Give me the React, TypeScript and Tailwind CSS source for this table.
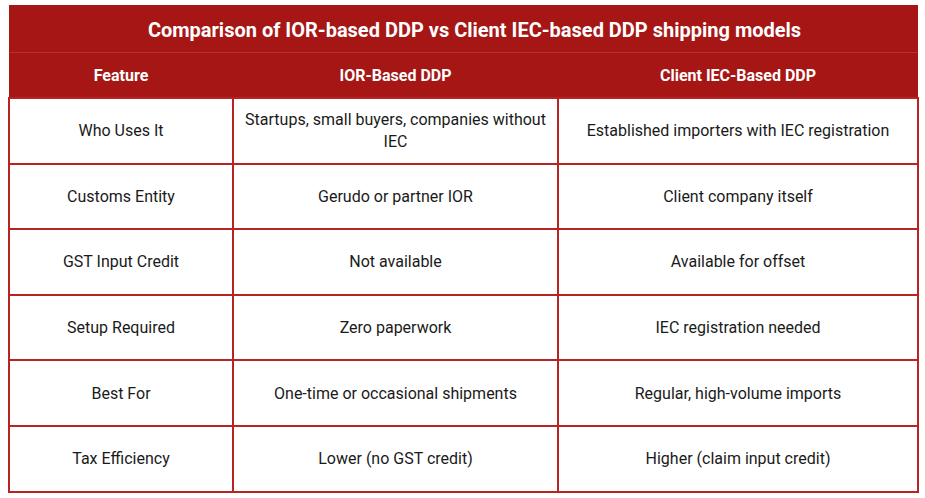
import React from "react";

const rows: [string, string, string][] = [
  ["Who Uses It", "Startups, small buyers, companies without IEC", "Established importers with IEC registration"],
  ["Customs Entity", "Gerudo or partner IOR", "Client company itself"],
  ["GST Input Credit", "Not available", "Available for offset"],
  ["Setup Required", "Zero paperwork", "IEC registration needed"],
  ["Best For", "One-time or occasional shipments", "Regular, high-volume imports"],
  ["Tax Efficiency", "Lower (no GST credit)", "Higher (claim input credit)"],
];

export default function App() {
  return (
    <div className="min-h-[498px] bg-white pl-[8px] pt-[5px] font-['Roboto',sans-serif]">
      <table className="w-[909px] table-fixed border-collapse">
        <colgroup>
          <col className="w-[224px]" />
          <col className="w-[325px]" />
          <col className="w-[360px]" />
        </colgroup>
        <thead>
          <tr className="h-[47px] bg-[#a51615]">
            <th
              colSpan={3}
              className="border-b border-[#b3332f] pl-[22px] pt-[3px] text-center text-[20px] font-bold text-white"
            >
              Comparison of IOR-based DDP vs Client IEC-based DDP shipping models
            </th>
          </tr>
          <tr className="h-[46px] bg-[#a51615] text-[16px] font-bold text-white">
            <th className="pt-[2px]">Feature</th>
            <th className="pt-[2px]">IOR-Based DDP</th>
            <th className="pt-[2px]">Client IEC-Based DDP</th>
          </tr>
        </thead>
        <tbody>
          {rows.map((r) => (
            <tr key={r[0]} className="h-[65.6px] text-[16px] text-[#1a1a1a]">
              {r.map((c, i) => (
                <td
                  key={i}
                  className="border-2 border-[#b82324] px-[6px] pt-[1px] text-center leading-[22px]"
                >
                  {c}
                </td>
              ))}
            </tr>
          ))}
        </tbody>
      </table>
    </div>
  );
}
